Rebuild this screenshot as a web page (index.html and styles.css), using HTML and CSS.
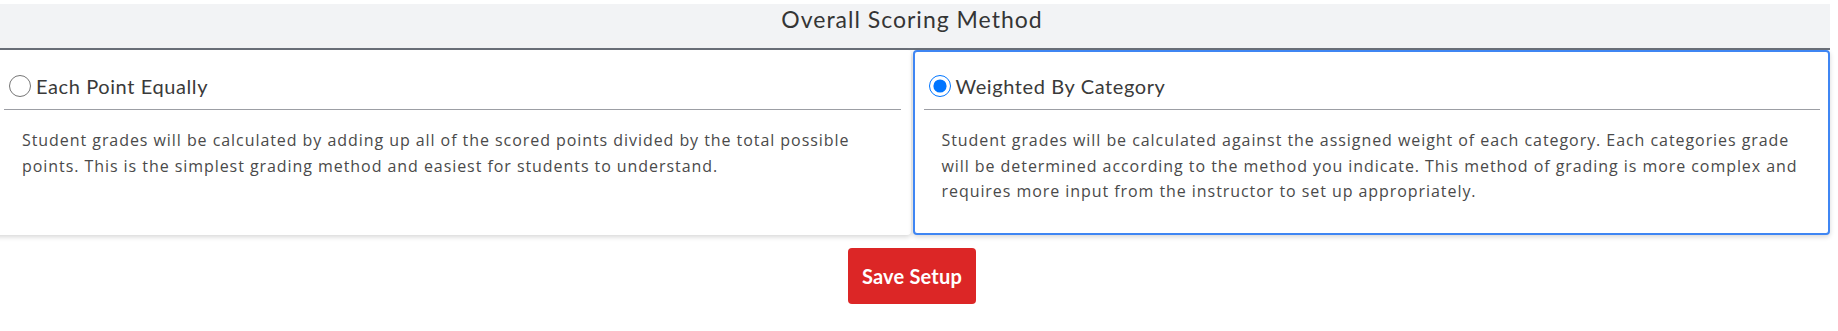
FILE: index.html
```html
<!DOCTYPE html>
<html lang="en">
<head>
<meta charset="utf-8">
<title>Overall Scoring Method</title>
<link rel="stylesheet" href="styles.css">
</head>
<body>
<div class="page">
  <div class="header">
    <h2 class="title">Overall Scoring Method</h2>
  </div>
  <div class="cards">
    <label class="card">
      <div class="card-head">
        <input class="radio" type="radio" name="method" value="points">
        <span class="card-label">Each Point Equally</span>
      </div>
      <div class="divider"></div>
      <p class="card-text">Student grades will be calculated by adding up all of the scored points divided by the total possible points. This is the simplest grading method and easiest for students to understand.</p>
    </label>
    <label class="card card-selected">
      <div class="card-head">
        <input class="radio" type="radio" name="method" value="weighted" checked>
        <span class="card-label">Weighted By Category</span>
      </div>
      <div class="divider"></div>
      <p class="card-text">Student grades will be calculated against the assigned weight of each category. Each categories grade will be determined according to the method you indicate. This method of grading is more complex and requires more input from the instructor to set up appropriately.</p>
    </label>
  </div>
  <div class="actions">
    <button class="btn-save" type="button">Save Setup</button>
  </div>
</div>
</body>
</html>
```
FILE: styles.css
```css
html, body {
  margin: 0;
  padding: 0;
  background: #ffffff;
}
body {
  font-family: "Open Sans", "Liberation Sans", sans-serif;
  overflow: hidden;
}
.page {
  width: 1830px;
  padding-top: 4px;
}
.header {
  height: 44px;
  background: #f2f3f5;
  border-bottom: 2px solid #6b7079;
  padding-right: 6px;
}
.title {
  margin: 0;
  font-family: Lato, "Open Sans", sans-serif;
  font-weight: 400;
  font-size: 23px;
  line-height: 30px;
  letter-spacing: 1px;
  color: #353535;
  text-align: center;
}
.cards {
  display: flex;
  gap: 2px;
  margin-left: -7px;
}
.card {
  display: block;
  flex: 1 1 0;
  box-sizing: border-box;
  border: 2px solid transparent;
  border-radius: 4px;
  padding: 23px 8px 28px 9px;
  background: #ffffff;
  box-shadow: 0 2px 5px rgba(0, 0, 0, 0.16);
  cursor: pointer;
}
.card-selected {
  border-color: #3f86f3;
}
.card-head {
  display: flex;
  align-items: center;
  gap: 5px;
  height: 22px;
  padding-left: 5px;
  margin-bottom: 12px;
}
.radio {
  width: 22px;
  height: 22px;
  margin: 0;
  accent-color: #0075ff;
}
.card-label {
  font-family: Lato, "Open Sans", sans-serif;
  font-size: 20px;
  letter-spacing: 0.6px;
  color: #3a3a3a;
}
.divider {
  height: 1px;
  background: #9c9ea4;
}
.card-text {
  margin: 18px 0 0 0;
  padding: 0 15px 0 18px;
  font-size: 16px;
  line-height: 25.6px;
  letter-spacing: 0.94px;
  color: #4a4a4a;
}
.actions {
  display: flex;
  justify-content: center;
  padding-top: 13px;
  padding-right: 6px;
}
.btn-save {
  width: 128px;
  height: 56px;
  border: none;
  border-radius: 4px;
  background: #dc2626;
  color: #ffffff;
  font-family: Lato, "Open Sans", sans-serif;
  font-weight: 700;
  font-size: 20px;
  letter-spacing: 0.2px;
  cursor: pointer;
}
```
